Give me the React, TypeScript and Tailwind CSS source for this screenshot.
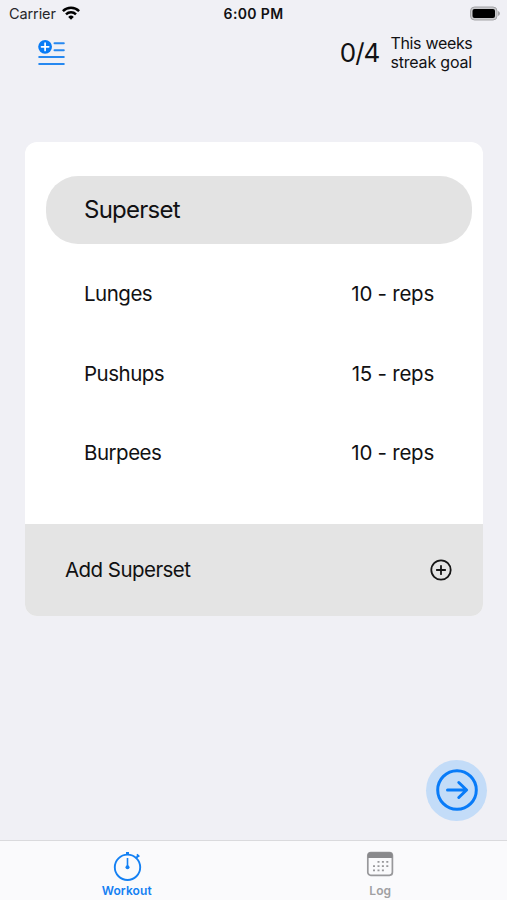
const exercises = [
  { name: 'Lunges', amount: '10 - reps' },
  { name: 'Pushups', amount: '15 - reps' },
  { name: 'Burpees', amount: '10 - reps' },
];

function StatusBar() {
  return (
    <div className="grid h-7 grid-cols-3 items-center pl-[9px] pr-[7px] text-[14.5px] leading-7">
      <div className="flex items-center gap-[6px]">
        <span className="tracking-[-0.1px] text-[#26262a]">Carrier</span>
        <svg width="18" height="14" viewBox="0 0 18 14" fill="none" stroke="#000" strokeWidth="2.5" className="-mt-[3px]">
          <path d="M0.9 5.1a11.6 11.6 0 0 1 16.2 0" />
          <path d="M4 8.3a7.2 7.2 0 0 1 10 0" />
          <path d="M9 13.7 6.2 10.9a4 4 0 0 1 5.6 0Z" fill="#000" stroke="none" />
        </svg>
      </div>
      <span className="-ml-[2px] text-center text-[14px] font-semibold tracking-[0.35px] text-[#111113]">6:00 PM</span>
      <svg width="31" height="15" viewBox="0 0 31 15" className="-mt-0.5 justify-self-end">
        <rect x="1.5" y="1" width="26.5" height="13" rx="4" fill="#c9c9cc" stroke="#a4a4a7" />
        <rect x="3.5" y="3" width="22.5" height="9" rx="2" fill="#000" />
        <path d="M29 5v5q2-.8 2-2.5T29 5Z" fill="#a4a4a7" />
      </svg>
    </div>
  );
}

function AddListIcon() {
  return (
    <svg width="28" height="28" viewBox="0 0 28 28" fill="none" strokeLinecap="round" className="mt-[11px]">
      <path d="M17.5 4.2h9.3M17.5 11.2h9.3M2.2 18h24.6M2.2 24.9h24.6" stroke="#2688f0" strokeWidth="2" />
      <circle cx="8.1" cy="7.8" r="6.9" fill="#087bf5" />
      <path d="M8.1 4.2v7.2M4.5 7.8h7.2" stroke="#fff" strokeWidth="1.7" />
    </svg>
  );
}

function Tabs() {
  return (
    <nav className="grid h-[60px] grid-cols-2 border-t border-[#dadadd] bg-[#fafafc] text-[12px] font-semibold leading-[14px]">
      <div className="flex flex-col items-center text-[#1480f3]">
        <svg width="30" height="32" viewBox="0 0 30 32" fill="none" stroke="currentColor" className="mt-[9px]">
          <circle cx="15.5" cy="17.3" r="12.7" strokeWidth="1.9" />
          <path d="M15.5 2v3" strokeWidth="3" />
          <path d="M23.8 8.4 26.5 5.5" strokeWidth="2" />
          <path d="m24.9 4.4 2.4 2.2" strokeWidth="1.8" />
          <path d="M15.5 8v9" strokeWidth="1.6" />
          <circle cx="15.5" cy="17.3" r="2" fill="currentColor" stroke="none" />
        </svg>
        <span className="mt-[2px] tracking-[0.1px]">Workout</span>
      </div>
      <div className="flex flex-col items-center text-[#98989b]">
        <svg width="28" height="32" viewBox="0 0 28 32" fill="none" className="mt-[9px]">
          <rect x="1.8" y="2.5" width="24.6" height="22.8" rx="3" stroke="currentColor" strokeWidth="1.7" />
          <path d="M1.8 8V5.3q0-3 3-3h18.6q3 0 3 3V8Z" fill="#89898c" />
          <path d="M11.5 11.9h2m2.4 0h2m2.4 0h2M7 16.1h2m2.5 0h2m2.4 0h2m2.4 0h2M7 20.3h2m2.5 0h2m2.4 0h2" stroke="currentColor" strokeWidth="1.8" />
        </svg>
        <span className="mt-[2px] tracking-[0.1px] text-[#a0a0a3]">Log</span>
      </div>
    </nav>
  );
}

export default function App() {
  return (
    <div className="flex h-[900px] w-[507px] flex-col overflow-hidden bg-[#f0f0f5] font-['Inter',sans-serif] text-[#111113]">
      <StatusBar />
      <header className="flex h-[114px] items-start justify-between pl-[37px] pr-[34.5px]">
        <AddListIcon />
        <div className="mt-[5px] flex items-center gap-[11px]">
          <span className="text-[26px] leading-10 tracking-[-1px]">0/4</span>
          <span className="text-[16px] leading-[19px] tracking-[-0.32px]">
            This weeks
            <br />
            <span className="tracking-[-0.18px]">streak goal</span>
          </span>
        </div>
      </header>
      <main className="ml-[25px] mr-6 flex h-[474px] flex-col overflow-hidden rounded-[12px] bg-white">
        <div className="ml-[21px] mr-[11px] mt-[34px] flex h-[68px] shrink-0 items-center rounded-[32px] bg-[#e3e3e3] pl-[38px] text-[24px] tracking-[-0.75px]">
          Superset
        </div>
        <div className="flex flex-1 flex-col pl-[59px] pr-[49px] pt-[11px]">
          {exercises.map((item) => (
            <div key={item.name} className="flex h-[79.5px] items-center justify-between text-[20.5px]">
              <span className="tracking-[-0.5px]">{item.name}</span>
              <span className="tracking-[-0.25px]">{item.amount}</span>
            </div>
          ))}
        </div>
        <div className="flex h-[92px] shrink-0 items-center justify-between bg-[#e4e4e4] pl-[40px] pr-[31px] pt-px text-[20.5px] tracking-[-0.55px]">
          <span>Add Superset</span>
          <svg width="22" height="22" viewBox="0 0 22 22" fill="none" stroke="#151515" strokeWidth="1.8" strokeLinecap="round" className="-mt-px">
            <circle cx="11" cy="11" r="9.7" />
            <path d="M11 6.8v8.4M6.8 11h8.4" />
          </svg>
        </div>
      </main>
      <div className="flex flex-1 items-end justify-end pb-[19.5px] pr-5">
        <button className="flex size-[61px] items-center justify-center rounded-full bg-[#c3dcf8]" aria-label="Next">
          <svg width="42" height="42" viewBox="0 0 42 42" fill="none" stroke="#087bf8" strokeWidth="3" strokeLinecap="round" strokeLinejoin="round">
            <circle cx="21" cy="21" r="19.3" />
            <path d="M11.5 21h19M22.8 13.5l7.8 7.5-7.8 7.5" />
          </svg>
        </button>
      </div>
      <Tabs />
    </div>
  );
}
